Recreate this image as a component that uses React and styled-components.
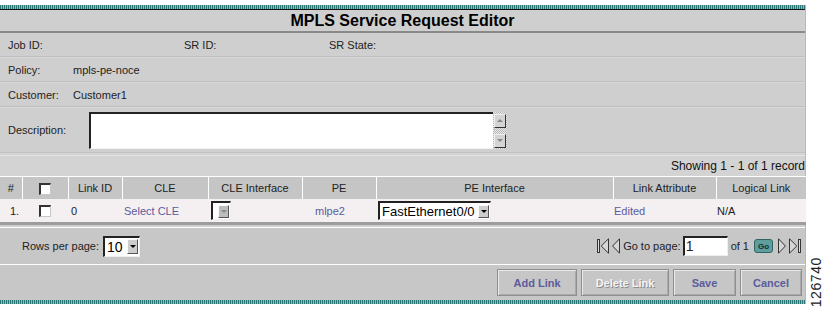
import React from "react";
import styled, { createGlobalStyle } from "styled-components";

const GlobalStyle = createGlobalStyle`
  body {
    margin: 0;
    background: #fff;
    font-family: "Liberation Sans", Arial, sans-serif;
  }
`;

const Page = styled.div`
  display: flex;
  align-items: flex-start;
  gap: 4px;
  width: 823px;
  height: 309px;
  padding-top: 5px;
  box-sizing: border-box;
`;

const Panel = styled.div`
  width: 806px;
  flex-shrink: 0;
  display: flex;
  flex-direction: column;
  background: #cfcfcf;
  border-right: 1px solid #b9b9b9;
  box-sizing: border-box;
`;

const TealRule = styled.div`
  height: 4px;
  background: repeating-linear-gradient(90deg, #2c7775 0 1px, #8fbcbb 1px 2px);
  border-bottom: ${(p) => (p.$top ? "1px solid #111" : "none")};
`;

const Title = styled.div`
  height: 21px;
  line-height: 21px;
  text-align: center;
  font-size: 16px;
  font-weight: bold;
  color: #000;
  border-bottom: 2px solid #8a8a8a;
`;

const FieldRow = styled.div`
  display: grid;
  grid-template-columns: ${(p) => p.$cols || "65px 1fr"};
  align-items: center;
  height: ${(p) => p.$h || 23}px;
  padding-left: 8px;
  font-size: 11px;
  color: #222;
  border-bottom: 1px solid #c0c0c0;
  box-shadow: 0 1px 0 #d9d9d9;
  margin-bottom: 1px;
`;

const Label = styled.span``;

const DescWrap = styled.div`
  display: flex;
  align-items: stretch;
  margin-left: 16px;
`;

const TextBox = styled.div`
  width: 404px;
  height: 37px;
  box-sizing: border-box;
  background: #fff;
  border-top: 2px solid #222;
  border-left: 2px solid #222;
  border-bottom: 1px solid #f4f4f4;
`;

const ScrollBar = styled.div`
  width: 14px;
  height: 37px;
  display: flex;
  flex-direction: column;
  justify-content: space-between;
  box-sizing: border-box;
  padding: 2px 1px 1px 1px;
  background: repeating-conic-gradient(#b5b5b5 0 25%, #ececec 0 50%) 0 0 / 2px 2px;
`;

const ScrollBtn = styled.div`
  height: 12px;
  background: #d4d4d4;
  border: 1px solid;
  border-color: #f0f0f0 #333 #333 #f0f0f0;
  display: flex;
  align-items: center;
  justify-content: center;
`;

const Tri = styled.span`
  width: 0;
  height: 0;
  border-left: 3px solid transparent;
  border-right: 3px solid transparent;
  ${(p) =>
    p.$up
      ? `border-bottom: 3px solid ${p.$c || "#000"};`
      : `border-top: 3px solid ${p.$c || "#000"};`}
`;

const ShowingBar = styled.div`
  height: 20px;
  line-height: 21px;
  text-align: right;
  font-size: 12px;
  color: #111;
  background: #d3d3d3;
  border-top: 1px solid #e6e6e6;
  margin-top: 1px;
`;

const Table = styled.table`
  width: 806px;
  border-collapse: collapse;
  table-layout: fixed;
  font-size: 11px;
  color: #222;
`;

const Th = styled.th`
  height: 22px;
  padding: 0;
  font-weight: normal;
  text-align: center;
  background: #c5c5c5;
  border-top: 1px solid #fff;
  border-left: ${(p) => (p.$first ? "none" : "1px solid #fff")};
`;

const Row = styled.tr`
  background: #f4f0f2;
  border-bottom: 3px solid #9c9c9c;
`;

const Td = styled.td`
  height: 23px;
  padding: 0 0 0 ${(p) => p.$pl || 0}px;
  text-align: ${(p) => p.$align || "left"};
`;

const Link = styled.span`
  color: #5b5b9c;
`;

const Check = styled.span`
  display: inline-block;
  width: 12px;
  height: 12px;
  box-sizing: border-box;
  background: #fff;
  border-top: 2px solid #333;
  border-left: 2px solid #333;
  border-right: 1px solid #c8c8c8;
  border-bottom: 1px solid #c8c8c8;
  vertical-align: middle;
`;

const SelectBox = styled.div`
  display: inline-flex;
  align-items: center;
  width: ${(p) => p.$w}px;
  height: ${(p) => p.$h}px;
  box-sizing: border-box;
  background: #fff;
  border-top: 2px solid #222;
  border-left: 2px solid #222;
  border-right: 1px solid #eee;
  border-bottom: 1px solid #eee;
  font-size: ${(p) => p.$fs || 13}px;
  color: #000;
  vertical-align: middle;
`;

const SelectText = styled.span`
  flex: 1;
  padding-left: 2px;
  white-space: nowrap;
  overflow: hidden;
`;

const ArrowBtn = styled.span`
  width: 11px;
  height: calc(100% - 3px);
  margin-right: 1px;
  box-sizing: border-box;
  background: ${(p) => (p.$disabled ? "#bdbdbd" : "#cdcdcd")};
  border: 1px solid;
  border-color: #fafafa #555 #555 #fafafa;
  display: flex;
  align-items: center;
  justify-content: center;
`;

const Pager = styled.div`
  display: flex;
  align-items: center;
  justify-content: space-between;
  height: 36px;
  padding: 0 4px 0 22px;
  margin-top: 2px;
  background: #c7c7c7;
  border-top: 1px solid #fff;
  border-bottom: 1px solid #fff;
  font-size: 11px;
  color: #222;
`;

const Group = styled.div`
  display: flex;
  align-items: center;
  gap: ${(p) => p.$gap || 4}px;
`;

const PageInput = styled.div`
  width: 45px;
  height: 20px;
  box-sizing: border-box;
  background: #fff;
  border-top: 2px solid #222;
  border-left: 2px solid #222;
  border-right: 1px solid #eee;
  border-bottom: 1px solid #eee;
  font-size: 14px;
  line-height: 17px;
  padding-left: 1px;
  margin-left: -1px;
`;

const GoBtn = styled.span`
  width: 19px;
  height: 14px;
  box-sizing: border-box;
  border-radius: 3px;
  background: #5f9e9c;
  border: 1px solid #2f6462;
  font-size: 8px;
  font-weight: bold;
  color: #11302f;
  display: flex;
  align-items: center;
  justify-content: center;
  margin: 0 2px;
`;

const ButtonBar = styled.div`
  display: flex;
  justify-content: flex-end;
  align-items: center;
  gap: 4px;
  height: 35px;
  padding-right: 3px;
  background: #c7c7c7;
`;

const Button = styled.div`
  width: ${(p) => p.$w}px;
  height: 27px;
  box-sizing: border-box;
  display: flex;
  align-items: center;
  justify-content: center;
  background: #c6c6c6;
  border: 1px solid #8f8f8f;
  box-shadow: inset 1px 1px 0 #e9e9e9, inset -1px -1px 0 #a9a9a9;
  font-size: 11px;
  font-weight: bold;
  color: ${(p) => (p.$disabled ? "#f4f4f4" : "#5c5c9c")};
  text-shadow: ${(p) => (p.$disabled ? "1px 1px 0 #8c8c8c" : "none")};
`;

const SideNumber = styled.div`
  align-self: flex-end;
  margin-bottom: 2px;
  writing-mode: vertical-rl;
  transform: rotate(180deg);
  font-size: 14px;
  line-height: 12px;
  color: #222;
  letter-spacing: 0.6px;
`;

const FirstIcon = () => (
  <svg width="12" height="16" viewBox="0 0 12 16">
    <rect x="0.5" y="1.5" width="2" height="13" fill="#ddd" stroke="#333" />
    <path d="M11.5 0.8 L4.2 8 L11.5 15.2 Z" fill="#d6d6d6" stroke="#333" />
  </svg>
);

const PrevIcon = () => (
  <svg width="8" height="16" viewBox="0 0 8 16">
    <path d="M7.5 0.8 L0.6 8 L7.5 15.2 Z" fill="#d6d6d6" stroke="#333" />
  </svg>
);

const NextIcon = () => (
  <svg width="8" height="16" viewBox="0 0 8 16">
    <path d="M0.5 0.8 L7.4 8 L0.5 15.2 Z" fill="#d6d6d6" stroke="#333" />
  </svg>
);

const LastIcon = () => (
  <svg width="12" height="16" viewBox="0 0 12 16">
    <path d="M0.5 0.8 L7.8 8 L0.5 15.2 Z" fill="#d6d6d6" stroke="#333" />
    <rect x="9.5" y="1.5" width="2" height="13" fill="#ddd" stroke="#333" />
  </svg>
);

const columns = [
  ["#", 22],
  ["check", 46],
  ["Link ID", 54],
  ["CLE", 86],
  ["CLE Interface", 94],
  ["PE", 74],
  ["PE Interface", 237],
  ["Link Attribute", 103],
  ["Logical Link", 90],
];

const App = () => (
  <Page>
    <GlobalStyle />
    <Panel>
      <TealRule $top />
      <Title>MPLS Service Request Editor</Title>
      <FieldRow $cols="176px 145px 1fr">
        <Label>Job ID:</Label>
        <Label>SR ID:</Label>
        <Label>SR State:</Label>
      </FieldRow>
      <FieldRow>
        <Label>Policy:</Label>
        <span>mpls-pe-noce</span>
      </FieldRow>
      <FieldRow>
        <Label>Customer:</Label>
        <span>Customer1</span>
      </FieldRow>
      <FieldRow $cols="65px 1fr" $h={44}>
        <Label>Description:</Label>
        <DescWrap>
          <TextBox />
          <ScrollBar>
            <ScrollBtn>
              <Tri $up $c="#888" />
            </ScrollBtn>
            <ScrollBtn>
              <Tri $c="#888" />
            </ScrollBtn>
          </ScrollBar>
        </DescWrap>
      </FieldRow>
      <ShowingBar>Showing 1 - 1 of 1 record</ShowingBar>
      <Table>
        <colgroup>
          {columns.map(([name, w]) => (
            <col key={name} style={{ width: w }} />
          ))}
        </colgroup>
        <thead>
          <tr>
            {columns.map(([name], i) => (
              <Th key={name} $first={i === 0}>
                {name === "check" ? <Check /> : name}
              </Th>
            ))}
          </tr>
        </thead>
        <tbody>
          <Row>
            <Td $pl={10}>1.</Td>
            <Td $align="center">
              <Check />
            </Td>
            <Td $pl={3}>0</Td>
            <Td $pl={2}>
              <Link>Select CLE</Link>
            </Td>
            <Td $pl={3}>
              <SelectBox $w={20} $h={19}>
                <SelectText />
                <ArrowBtn $disabled>
                  <Tri $c="#888" />
                </ArrowBtn>
              </SelectBox>
            </Td>
            <Td $pl={13}>
              <Link>mlpe2</Link>
            </Td>
            <Td $pl={2}>
              <SelectBox $w={113} $h={19} $fs={13}>
                <SelectText>FastEthernet0/0</SelectText>
                <ArrowBtn>
                  <Tri />
                </ArrowBtn>
              </SelectBox>
            </Td>
            <Td $pl={1}>
              <Link>Edited</Link>
            </Td>
            <Td $pl={1}>N/A</Td>
          </Row>
        </tbody>
      </Table>
      <Pager>
        <Group>
          <span>Rows per page:</span>
          <SelectBox $w={37} $h={21} $fs={14}>
            <SelectText>10</SelectText>
            <ArrowBtn>
              <Tri />
            </ArrowBtn>
          </SelectBox>
        </Group>
        <Group $gap={3}>
          <FirstIcon />
          <PrevIcon />
          <span>Go to page:</span>
          <PageInput>1</PageInput>
          <span>of 1</span>
          <GoBtn>Go</GoBtn>
          <NextIcon />
          <LastIcon />
        </Group>
      </Pager>
      <ButtonBar>
        <Button $w={80}>Add Link</Button>
        <Button $w={88} $disabled>
          Delete Link
        </Button>
        <Button $w={63}>Save</Button>
        <Button $w={62}>Cancel</Button>
      </ButtonBar>
      <TealRule />
    </Panel>
    <SideNumber>126740</SideNumber>
  </Page>
);

export default App;
